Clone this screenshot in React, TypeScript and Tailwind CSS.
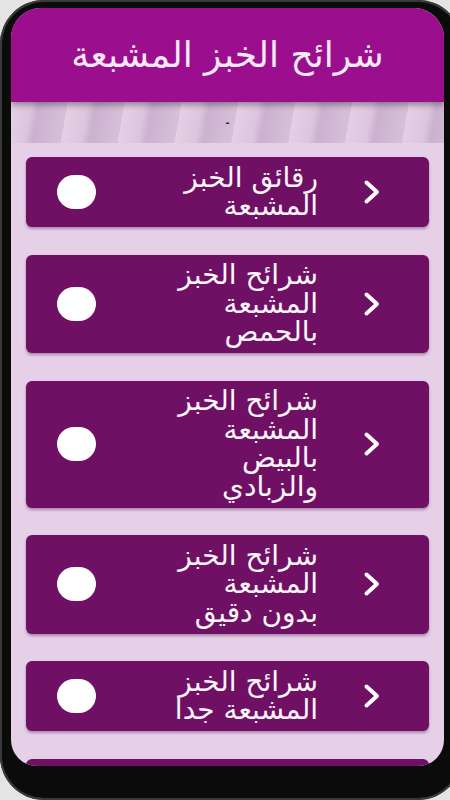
const items: string[] = [
  'رقائق الخبز\nالمشبعة',
  'شرائح الخبز\nالمشبعة\nبالحمص',
  'شرائح الخبز\nالمشبعة\nبالبيض\nوالزبادي',
  'شرائح الخبز\nالمشبعة\nبدون دقيق',
  'شرائح الخبز\nالمشبعة جدا',
]

const font = { fontFamily: '"DejaVu Sans", "Noto Sans Arabic", sans-serif' }

const Chevron = () => (
  <svg width="20" height="28" viewBox="0 0 20 28" fill="none">
    <polyline points="4.5,4.5 15,14 4.5,23.5" stroke="white" strokeWidth="4" strokeLinecap="round" strokeLinejoin="round" />
  </svg>
)

const Card = ({ text }: { text: string }) => (
  <div className="flex items-center rounded-[6px] bg-[#6f1064] py-[6.5px] shadow-[0_2px_3px_rgba(60,0,60,0.35)]">
    <div className="ml-[31px] h-[34px] w-[39px] shrink-0 rounded-full bg-white" />
    <div className="flex-1" />
    <p dir="rtl" className="whitespace-pre-line text-right text-[28px] leading-[28.5px] text-[#fdf6fc]" style={font}>
      {text}
    </p>
    <div className="ml-[40px] mr-[43px] flex w-[28px] justify-center">
      <Chevron />
    </div>
  </div>
)

export default function App() {
  return (
    <div className="h-[800px] w-[450px] overflow-hidden bg-[#e4e4e4]">
      <div className="h-[800px] w-[462px] rounded-[44px] bg-[#0b0b0b] pl-[11px] pr-[18px] pt-[8px] shadow-[inset_0_0_0_2px_#3a3a3a]">
        <div className="flex h-[758px] flex-col overflow-hidden rounded-t-[30px] rounded-b-[26px] bg-[#e6d0e8]">
          <div className="relative z-10 flex h-[94px] shrink-0 items-center justify-center bg-[#9b0e8e] shadow-[0_3px_6px_rgba(0,0,0,0.35)]">
            <h1 dir="rtl" className="text-[36px] leading-none text-[#f6e9f5]" style={font}>
              شرائح الخبز المشبعة
            </h1>
          </div>
          <div className="flex h-[41px] shrink-0 items-center justify-center bg-[repeating-linear-gradient(100deg,#e3d0e5_0px,#dcc6de_20px,#cbb2cf_28px,#d6c0d9_56px)]">
            <span className="text-[12px] font-bold text-[#333]" style={{ fontFamily: '"Liberation Sans", sans-serif' }}>-</span>
          </div>
          <div className="flex flex-col gap-[27.5px] px-[15px] pt-[14px]">
            {items.map((t, i) => (
              <Card key={i} text={t} />
            ))}
            <div className="h-[70px] rounded-[6px] bg-[#6f1064]" />
          </div>
        </div>
      </div>
    </div>
  )
}
